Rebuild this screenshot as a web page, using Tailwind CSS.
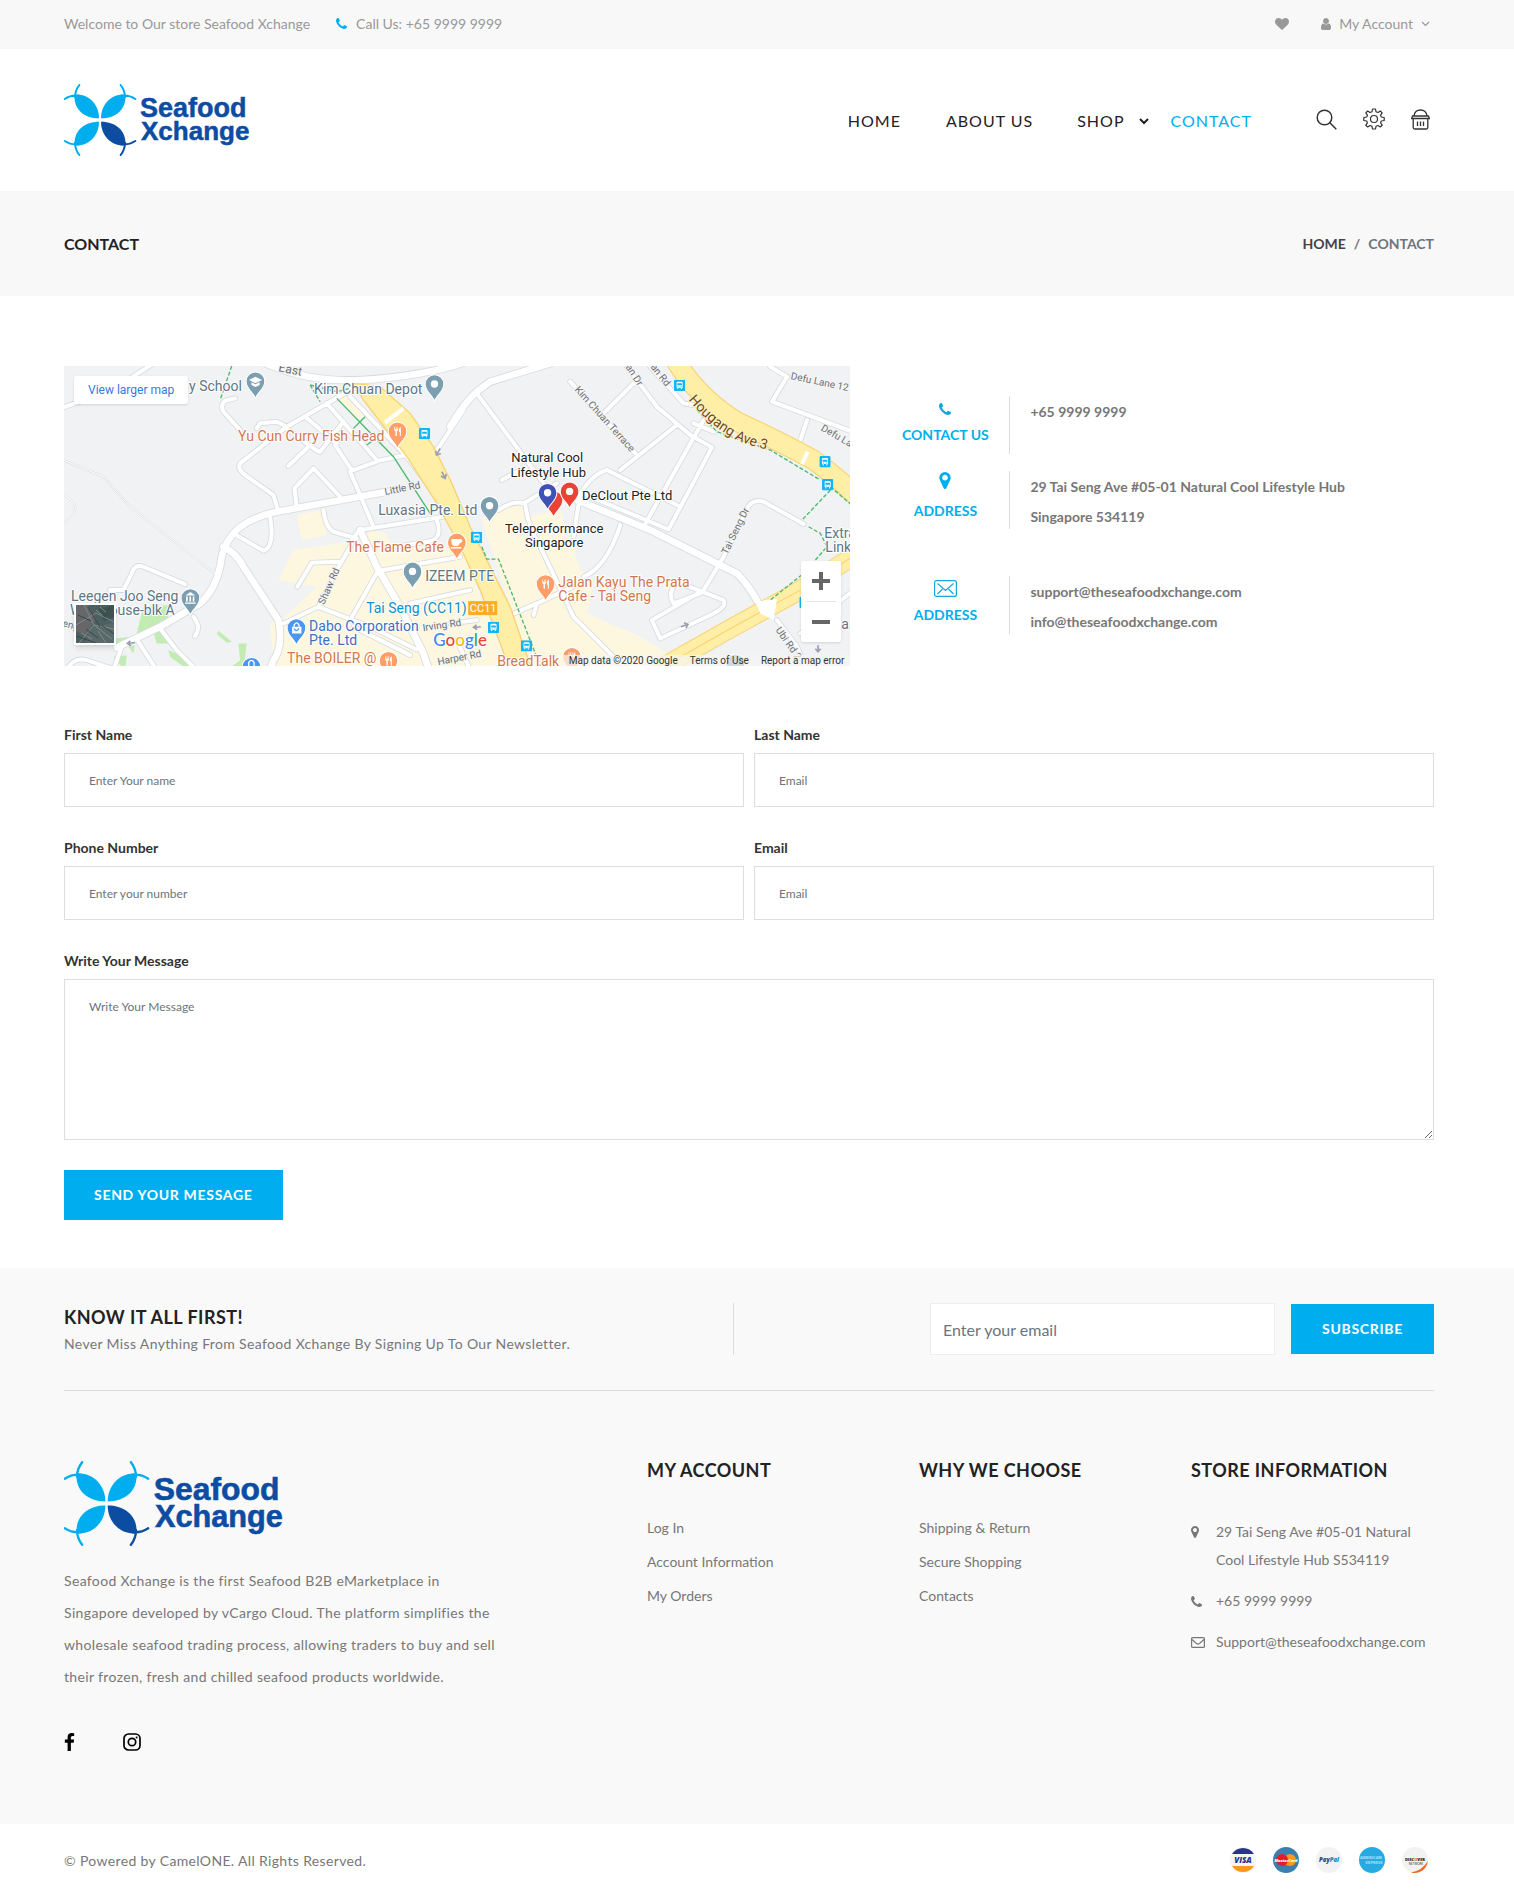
<!DOCTYPE html>
<html lang="en">
<head>
<meta charset="utf-8">
<meta name="viewport" content="width=device-width, initial-scale=1">
<title>Contact - Seafood Xchange</title>
<script src="https://cdn.jsdelivr.net/npm/@tailwindcss/browser@4"></script>
</head>
<body class="bg-white font-['Lato',sans-serif] text-sm text-[#777]">

<!-- shared icon definitions -->
<svg width="0" height="0" class="hidden" aria-hidden="true">
  <symbol id="phone" viewBox="192 256 1408 1408"><path d="M1600 1368q0 27-10 70.500t-21 68.500q-21 50-122 106-94 51-186 51-27 0-53-3.500t-57.500-12.500-47-14.500-55.500-20.500-49-18q-98-35-175-83-127-79-264-216t-216-264q-48-77-83-175-3-9-18-49t-20.500-55.500-14.500-47-12.500-57.500-3.500-53q0-92 51-186 56-101 106-122 25-11 68.500-21t70.500-10q14 0 21 3 18 6 53 76 11 19 30 54t35 63.500 31 53.500q3 4 17.500 25t21.500 35.500 7 28.500q0 20-28.500 50t-62 55-62 53-28.500 46q0 9 5 22.500t8.500 20.500 14 24 11.500 19q76 137 174 235t235 174q2 1 19 11.500t24 14 20.500 8.500 22.500 5q18 0 46-28.500t53-62 55-62 50-28.500q14 0 28.500 7t35.500 21.500 25 17.500q25 15 53.500 31t63.500 35 54 30q70 35 76 53 3 7 3 21z"/></symbol>
  <symbol id="marker" viewBox="384 128 1024 1536"><path d="M1152 640q0-106-75-181t-181-75-181 75-75 181 75 181 181 75 181-75 75-181zm256 0q0 109-33 179l-364 774q-16 33-47.500 52t-67.500 19-67.500-19-46.500-52l-365-774q-33-70-33-179 0-212 150-362t362-150 362 150 150 362z"/></symbol>
  <symbol id="heart" viewBox="0 128 1792 1536"><path d="M896 1664q-26 0-44-18l-624-602q-10-8-27.500-26t-55.500-65.500-68-97.500-53.500-121-23.500-138q0-220 127-344t351-124q62 0 126.500 21.500t120 58 95.500 68.500 76 68q36-36 76-68t95.500-68.500 120-58 126.500-21.500q224 0 351 124t127 344q0 221-229 450l-623 600q-18 18-44 18z"/></symbol>
  <symbol id="user" viewBox="256 128 1280 1536"><path d="M1536 1399q0 109-62.500 187t-150.500 78h-854q-88 0-150.500-78t-62.500-187q0-85 8.500-160.500t31.500-152 58.500-131 94-89 134.500-34.500q131 128 313 128t313-128q76 0 134.500 34.500t94 89 58.500 131 31.500 152 8.500 160.500zm-256-887q0 159-112.500 271.500t-271.500 112.500-271.500-112.500-112.500-271.500 112.500-271.500 271.500-112.500 271.500 112.500 112.500 271.500z"/></symbol>
  <symbol id="facebook" viewBox="479 0 864 1664"><path d="M1343 12v264h-157q-86 0-116 36t-30 108v189h293l-39 296h-254v759h-306v-759h-255v-296h255v-218q0-186 104-288.500t277-102.500q147 0 228 12z"/></symbol>
  <symbol id="logo" viewBox="0 0 188 72">
    <g transform="scale(.3333)">
      <g id="petal" fill="#00aeef" stroke="none"><path d="M32 32C72 28 105 60 105 103C60 103 28 75 32 32Z"/><path d="M46 3Q33 20 33 40M2 45Q20 33 42 35" fill="none" stroke="#00aeef" stroke-width="6" stroke-linecap="round"/></g>
      <use href="#petal" transform="matrix(-1 0 0 1 216 0)"/>
      <use href="#petal" transform="matrix(1 0 0 -1 0 216)"/>
      <g fill="#0c4da2" transform="rotate(180 108 108)"><path d="M32 32C72 28 105 60 105 103C60 103 28 75 32 32Z"/><path d="M46 3Q33 20 33 40M2 45Q20 33 42 35" fill="none" stroke="#0c4da2" stroke-width="6" stroke-linecap="round"/></g>
    </g>
    <g fill="#0c4da2" stroke="#0c4da2" stroke-width=".5" font-family="'Liberation Sans',Arial,sans-serif" font-weight="700"><text x="76" y="33" font-size="27">Seafood</text><text x="77" y="56" font-size="26">Xchange</text></g>
  </symbol>
  <symbol id="pin" viewBox="-30 -30 60 84" overflow="visible"><path d="M0 52C-4 34-28 24-28 0A28 28 0 1 1 28 0C28 24 4 34 0 52Z"/></symbol>
  <symbol id="bus" viewBox="0 0 34 34"><rect width="34" height="34" rx="4" fill="#12b5f5"/><path d="M8 9Q8 6 11 6H23Q26 6 26 9V24H8Z" fill="#fff"/><path d="M10 11H24V17H10ZM11 20H14V22H11ZM20 20H23V22H20Z" fill="#12b5f5"/><path d="M10 24H13V28H10ZM21 24H24V28H21Z" fill="#fff"/></symbol>
  <symbol id="fork" viewBox="-14 -16 28 32"><path d="M-10-14V-5Q-10-1-6 0V14H-2V0Q2-1 2-5V-14H0V-6H-3V-14H-5V-6H-8V-14ZM10-14Q4-12 4-3V2H7V14H10Z" fill="#fff"/></symbol>
</svg>

<div class="bg-[#f8f8f8]">
  <div class="flex h-[49px] items-center justify-between pr-20 pb-[2px] pl-16 text-[#999]">
    <div class="flex items-center">
      <span>Welcome to Our store Seafood Xchange</span>
      <svg class="mr-[9px] ml-[26px] size-[11px] fill-[#00aeef]"><use href="#phone"/></svg>
      <span>Call Us: +65 9999 9999</span>
    </div>
    <div class="flex items-center pr-1">
      <a href="#" aria-label="Wishlist"><svg class="h-3 w-[14px] fill-[#999]"><use href="#heart"/></svg></a>
      <button class="ml-8 flex items-center"><svg class="mr-2 h-3 w-[10px] fill-[#999]"><use href="#user"/></svg>My Account<svg class="ml-2 h-[6px] w-[9px]" viewBox="0 0 9 6" fill="none" stroke="#999" stroke-width="1.200"><path d="M1 1L4.500 4.500L8 1"/></svg></button>
    </div>
  </div>
</div>

<header class="flex items-center justify-between py-[35px] pr-20 pl-16">
  <a href="#" aria-label="Seafood Xchange"><svg class="h-[72px] w-[188px]"><use href="#logo"/></svg></a>
  <div class="flex items-center pr-1">
    <nav class="mt-[2px] flex items-center text-base leading-6 tracking-[1px] text-[#222]">
      <a href="#">HOME</a>
      <a href="#" class="ml-[45px]">ABOUT US</a>
      <a href="#" class="ml-11 flex items-center">SHOP<svg class="ml-[14px] h-[7px] w-[10px]" viewBox="0 0 10 7" fill="none" stroke="#222" stroke-width="2"><path d="M1 1L5 5L9 1"/></svg></a>
      <a href="#" class="ml-[22px] text-[#00aeef]">CONTACT</a>
    </nav>
    <div class="ml-16 flex items-center gap-[26px] pb-[2px]">
      <button aria-label="Search"><svg class="size-[21px]" viewBox="0 0 21 21" fill="none" stroke="#333" stroke-width="1.500"><circle cx="8.500" cy="8.500" r="7.300"/><path d="M13.800 13.800L20.300 20.300"/></svg></button>
      <button aria-label="Settings"><svg class="size-[22px]" viewBox="0 0 22 22" fill="none" stroke="#333" stroke-width="1.200" stroke-linejoin="round"><circle cx="11" cy="11" r="3.500"/><path d="M9.500 1H12.500L13 3.700L15 4.500L17.300 3L19.200 4.900L17.600 7.200L18.300 9L21.200 9.500V12.500L18.300 13L17.600 14.900L19.200 17.200L17.300 19L15 17.500L13 18.300L12.500 21H9.500L9 18.300L7 17.500L4.700 19L2.800 17.200L4.400 14.900L3.700 13L.8 12.500V9.500L3.700 9L4.400 7.200L2.800 4.900L4.700 3L7 4.500L9 3.700Z"/></svg></button>
      <button aria-label="Cart"><svg class="h-[21px] w-[19px]" viewBox="0 0 19 21" fill="none" stroke="#333" stroke-width="1.300"><path d="M3 7C4-1 15-1 16 7M1.500 7H17.500L18.300 9.500H.7ZM2.200 9.500V18.500Q2.200 20 3.800 20H15.200Q16.800 20 16.800 18.500V9.500"/><path d="M6.500 12.500V17M9.500 12.500V17M12.500 12.500V17"/></svg></button>
    </div>
  </div>
</header>

<div class="flex items-center justify-between bg-[#f8f8f8] py-10 pr-20 pl-16 leading-[25px] font-bold">
  <h1 class="text-base leading-[25px] text-[#222]">CONTACT</h1>
  <nav class="flex gap-2" aria-label="Breadcrumb"><a href="#" class="text-[#444]">HOME</a><span>/</span><span class="text-[#6c757d]">CONTACT</span></nav>
</div>

<main class="pt-[70px] pr-20 pb-12 pl-16">
  <section class="flex">
    <div class="relative h-[300px] w-[57.400%] shrink-0 overflow-hidden bg-[#f1f2f4] font-['Roboto',sans-serif]">
      <svg class="size-full" viewBox="0 0 786 300" preserveAspectRatio="xMinYMin slice" role="img" aria-label="Map of Tai Seng">
        <defs>
          <path id="lanes" d="M0 145L150 95L280 10M525 115L495 122Q480 135 490 155L540 210M880 85L680 200L540 310Q530 325 555 345L640 405L655 455M680 200L650 185L600 190L590 205M680 205L740 250L775 275M745 260L685 318M800 130L950 300M950 305L880 330Q868 325 865 315L825 255M850 185L780 275M950 303L1040 285M735 170L830 250M840 410L760 325L703 385L710 440M870 335L900 405L940 500M790 450Q795 500 820 515L890 535M630 470Q645 560 610 572L520 520M1150 470L900 510Q880 525 870 560L830 630L775 740L670 790M835 605L755 608L712 680M1200 590L970 630M955 630L870 780M775 740L930 800L1070 868M880 800L1050 885M375 672L250 620Q225 610 215 640L190 690L150 690M400 770Q425 800 405 828M300 805L350 870L410 930M235 845L290 930M20 930Q40 890 80 900L170 930M185 860L160 930M1210 150L1130 270M1130 480Q1150 540 1100 545L1010 560M1230 690L1050 730M1040 290L1200 500M870 110L1040 290M1170 790L1250 780M1190 840L1230 930M1250 100L1450 370M1325 360L1370 335M1530 65L1725 280M1630 160L1730 60M1680 330L1850 195M1700 20L1790 140L1890 225L1955 262L1825 508L1565 400M1930 180L1750 500M1540 530L1560 400Q1600 340 1640 330L1860 440M1680 495Q1640 620 1570 650M1315 450Q1360 420 1390 430L1490 370M1395 430Q1400 490 1440 560L1540 770L1630 860L1700 930M1350 765L1430 730L1580 660M1430 730L1420 765M2230 492L2110 425Q2070 415 2060 450L1990 590L1930 690L1775 780L1800 835L1960 760Q2000 740 1990 720L1850 665Q1820 700 1840 730L1920 700M2130 20L2180 50L2135 125L2390 220M2240 180L2215 255M1770 20L1870 130L1930 140M1900 190L1960 215M2150 780L2210 860L2240 930M2220 820L2380 690"/>
          <path id="streets" d="M980 395L650 455Q560 475 520 520Q485 560 480 620Q465 690 420 730L300 800L170 862M490 560Q530 580 550 620L655 780Q670 860 640 900L625 940M900 510L950 620L1020 740L1090 880L1110 940M620 12C700 45 780 65 900 60S1150 30 1210 8M1170 200Q1210 130 1250 95L1290 65L1470 10M1550 420L1770 510L2030 640Q2070 680 2100 740"/>
          <path id="trails" d="M10 300L130 350L210 440L465 640M10 405Q60 430 40 465L10 490"/>
          <path id="avenue" d="M624 34C644 58 666 72 680 77S704 84 735 92"/>
        </defs>
        <g transform="translate(-4 -6) scale(.33333)">
          <!-- built-up areas and parks -->
          <g fill="#fef7e0">
            <path d="M710 465L785 450L800 525L725 540ZM655 660L700 570L870 545L940 510L975 520L1000 560L1200 560L1350 930H645L630 790L665 780L770 680ZM835 120L860 100L920 165L890 180Z"/>
            <path d="M1265 480L1370 415L1400 470L1500 450L1560 630L1600 660L1580 760L1740 830L1900 930H1415L1350 740Z"/>
          </g>
          <path fill="#c2ecb3" d="M250 740L330 735L320 795L230 820ZM165 835L215 830L210 850L170 855ZM280 815L310 810L325 850L290 850ZM325 870L350 880L415 930H385L330 890ZM475 812L515 845L500 848L470 822ZM535 850L560 850L550 930H500L540 900ZM160 890L200 885L195 930ZM205 860L225 855L220 880Z"/>
          <!-- streets: grey casing below, white surface above -->
          <g fill="none" stroke="#d8dadd" stroke-linecap="round" stroke-linejoin="round"><use href="#lanes" stroke-width="17"/><use href="#streets" stroke-width="25"/><use href="#trails" stroke-width="6"/></g>
          <g fill="none" stroke="#fff" stroke-linecap="round" stroke-linejoin="round"><use href="#lanes" stroke-width="12"/><use href="#streets" stroke-width="20"/><use href="#trails" stroke-width="3"/></g>
          <path d="M1860 860L2090 740V770L1890 890H1830Z" fill="#dedfe1"/>
          <!-- main roads -->
          <path d="M880 70L960 80L1050 160L1120 260L1175 370L1230 500L1260 560L1350 740L1415 930H1350L1260 690L1200 560L1130 430L1040 290L910 120Z" fill="#ffeea5" stroke="#f8d374" stroke-width="4"/>
          <g fill="none"><path stroke="#f8d374" stroke-width="62" d="M1845 0Q1910 110 2030 185Q2170 250 2260 300Q2330 350 2400 420"/><path stroke="#ffeea5" stroke-width="55" d="M1845 0Q1910 110 2030 185Q2170 250 2260 300Q2330 350 2400 420"/>
          <path stroke="#f8d374" stroke-width="58" d="M2400 575L2220 690L2020 800L1790 930"/><path stroke="#ffeea5" stroke-width="52" d="M2400 575L2220 690L2020 800L1790 930"/><path stroke="#f8d374" stroke-width="3" d="M2400 575L2220 690L2020 800L1790 930"/></g>
          <path d="M2085 725L2150 715L2140 780L2100 760Z" fill="#fff"/>
          <path d="M975 188L1030 145M2242 275L2225 312" stroke="#fff" stroke-width="12"/>
          <g fill="none" stroke="#4bb86e" stroke-width="4"><path d="M830 115L1000 290L1110 460M915 170L880 205M940 240L920 255"/><path stroke-dasharray="12 6" d="M515 18L480 120M750 75L780 125M750 75L830 95L870 85M1910 150L1970 215L2130 270L2280 360M2310 390L2225 480M2245 500L2280 520L2300 560L2230 640L2130 720M2310 380L2380 440M1265 560L1280 597L1315 597L1440 918"/></g>
          <!-- one-way arrows -->
          <g fill="none" stroke="#9a9fb0" stroke-width="5"><path d="M1140 265L1130 283M1126 272L1129 285L1142 281M1145 335L1154 353M1142 348L1155 355L1158 342M202 850L225 847M211 842L202 850L213 857M1240 802L1262 800M1249 794L1240 802L1251 808M1862 800L1883 793M1871 788L1883 793L1877 804M2273 855V875M2265 866L2273 875L2281 866"/></g>
          <!-- bus stops -->
          <use href="#bus" x="1076" y="204" width="34" height="34"/><use href="#bus" x="1841" y="59" width="34" height="34"/><use href="#bus" x="2277" y="288" width="34" height="34"/><use href="#bus" x="2285" y="357" width="34" height="34"/><use href="#bus" x="1232" y="515" width="34" height="34"/><use href="#bus" x="1283" y="785" width="34" height="34"/><use href="#bus" x="1382" y="840" width="34" height="34"/><use href="#bus" x="2217" y="710" width="34" height="34"/>
          <!-- place pins -->
          <g fill="#7b9eb0" stroke="#fff" stroke-width="3">
            <use href="#pin" x="556" y="34" width="60" height="84"/><use href="#pin" x="1093" y="42" width="60" height="84"/><use href="#pin" x="361" y="684" width="60" height="84"/><use href="#pin" x="1027" y="604" width="60" height="84"/><use href="#pin" x="1258" y="407" width="60" height="84"/><use href="#pin" x="1995" y="880" width="60" height="84"/>
          </g>
          <g fill="#ff9e67" stroke="#fff" stroke-width="3"><use href="#pin" x="982" y="184" width="60" height="84"/><use href="#pin" x="1160" y="517" width="60" height="84"/><use href="#pin" x="955" y="872" width="60" height="84"/><use href="#pin" x="1426" y="642" width="60" height="84"/><use href="#pin" x="1505" y="860" width="60" height="84"/></g>
          <g fill="#4b96f3" stroke="#fff" stroke-width="3"><use href="#pin" x="679" y="774" width="60" height="84"/><use href="#pin" x="544" y="890" width="60" height="84"/></g>
          <g stroke="#fff" stroke-width="3"><use href="#pin" x="1450" y="390" width="60" height="84" fill="#ea4335"/><use href="#pin" x="1432" y="368" width="60" height="84" fill="#3f51b5"/><use href="#pin" x="1498" y="364" width="60" height="84" fill="#ea4335"/></g>
          <g fill="#fff"><circle cx="1123" cy="72" r="11"/><circle cx="1057" cy="634" r="11"/><circle cx="1288" cy="437" r="11"/><circle cx="1462" cy="398" r="11"/><circle cx="1528" cy="394" r="11"/><path d="M567 60L586 50L606 60L586 70ZM574 67L586 73L599 67V75L586 81L574 75ZM376 706L391 696L406 706ZM378 709H383V725H378ZM388 709H393V725H388ZM398 709H403V725H398ZM375 727H407V731H375ZM1174 537H1200Q1208 537 1206 546L1198 550Q1196 558 1186 558Q1176 558 1174 548ZM1172 561H1204V565H1172ZM696 800H724V820H696Z"/></g>
          <g fill="none" stroke="#fff" stroke-width="4"><path d="M702 800V795Q709 782 717 795V800M566 920V907Q574 894 582 907V920"/></g>
          <path d="M702 805Q709 818 717 805" fill="none" stroke="#4b96f3" stroke-width="4"/>
          <use href="#fork" x="998" y="198" width="28" height="32"/><use href="#fork" x="971" y="886" width="28" height="32"/><use href="#fork" x="1442" y="656" width="28" height="32"/><use href="#fork" x="1521" y="874" width="28" height="32"/>
        </g>
        <g font-size="10" fill="#6b6f73" stroke="#f5f5f5" stroke-width="2" paint-order="stroke">
          <text x="321" y="129" transform="rotate(-11 321 129)">Little Rd</text>
          <text x="260" y="239" transform="rotate(-66 260 239)">Shaw Rd</text>
          <text x="359" y="265" transform="rotate(-8 359 265)">Irving Rd</text>
          <text x="374" y="299" transform="rotate(-11 374 299)">Harper Rd</text>
          <text x="510" y="24" transform="rotate(48 510 24)">Kim Chuan Terrace</text>
          <text x="561" y="1" transform="rotate(57 561 1)">an Dr</text>
          <text x="586" y="1" transform="rotate(52 586 1)">an Rd</text>
          <text x="726" y="13" transform="rotate(12 726 13)">Defu Lane 12</text>
          <text x="756" y="64" transform="rotate(30 756 64)">Defu Lane</text>
          <text x="663" y="189" transform="rotate(-64 663 189)">Tai Seng Dr</text>
          <text x="711" y="264" transform="rotate(55 711 264)">Ubi Rd 2</text>
          <text x="-2" y="260" transform="rotate(15 -2 260)">eng</text>
          <text x="214" y="5" font-size="12" transform="rotate(12 214 5)">East</text>
        </g>
        <text font-size="14" fill="#6e4a1d" stroke="#fff3c4" stroke-width="2" paint-order="stroke"><textPath href="#avenue">Hougang Ave 3</textPath></text>
        <g font-size="14" stroke="#fff" stroke-width="2" stroke-linejoin="round" paint-order="stroke" fill="#5d7684">
          <text x="125" y="25">y School</text>
          <text x="250" y="28">Kim Chuan Depot</text>
          <text x="314" y="149">Luxasia Pte. Ltd</text>
          <text x="361" y="215">IZEEM PTE</text>
          <text x="7" y="235">Leegen Joo Seng</text>
          <text x="6" y="249">Warehouse-blk A</text>
          <text x="760" y="172">Extra</text><text x="761" y="186">Link</text>
          <text x="777" y="263">az</text>
          <g fill="#d3764c"><text x="174" y="75">Yu Cun Curry Fish Head</text><text x="282" y="186">The Flame Cafe</text><text x="223" y="297">The BOILER @</text><text x="494" y="221">Jalan Kayu The Prata</text><text x="494" y="235">Cafe - Tai Seng</text><text x="433" y="300">BreadTalk</text></g>
          <g fill="#3d6fc0"><text x="245" y="265">Dabo Corporation</text><text x="245" y="279">Pte. Ltd</text></g>
          <text x="302" y="247" fill="#0e8fce">Tai Seng (CC11)</text>
          <g fill="#222" font-size="13" text-anchor="middle"><text x="483" y="96">Natural Cool</text><text x="484" y="111">Lifestyle Hub</text><text x="490" y="167">Teleperformance</text><text x="490" y="181">Singapore</text><text x="563" y="134">DeClout Pte Ltd</text></g>
        </g>
        <rect x="404" y="235" width="29" height="14" fill="#fbad26"/><text x="419" y="246" font-size="11" fill="#fff" text-anchor="middle">CC11</text>
        <text x="369" y="280" font-size="17" font-weight="500" font-family="Lato,sans-serif" stroke="#fff" stroke-width="2" paint-order="stroke"><tspan fill="#4285f4">G</tspan><tspan fill="#ea4335">o</tspan><tspan fill="#fbbc05">o</tspan><tspan fill="#4285f4">g</tspan><tspan fill="#34a853">l</tspan><tspan fill="#ea4335">e</tspan></text>
      </svg>
      <a href="#" class="absolute top-[10px] left-[10px] rounded-xs bg-white px-[14px] py-[6px] text-xs leading-4 text-[#3a78e0] shadow">View larger map</a>
      <button aria-label="Satellite view" class="absolute bottom-[21px] left-[10px] size-[42px] border-2 border-white bg-[#4d5f60] shadow-md"><svg viewBox="0 0 38 38" class="size-full" fill="none" stroke-width="1"><path d="M0 0H12L20 14L9 30L0 26Z" fill="#67676a"/><path d="M22 4L38 0V12L28 16Z" fill="#3c5350"/><path d="M14 22L38 18V38H10Z" fill="#59696a"/><path stroke="#7e8b8b" d="M0 20L20 8L38 17M3 38L18 20L36 34M8 0L18 20L38 24M20 5L26 10M24 2L31 8M5 28L16 34M22 26L30 38"/><path stroke="#364846" d="M2 10L15 16M12 2L24 22M0 31L20 38M25 20L38 29M28 12L34 2M10 24L22 33"/></svg></button>
      <div class="absolute right-[9px] bottom-6 flex w-10 flex-col rounded-xs bg-white shadow">
        <button aria-label="Zoom in" class="flex h-10 items-center justify-center"><svg class="size-[18px]" viewBox="0 0 18 18"><path d="M7 0H11V7H18V11H11V18H7V11H0V7H7Z" fill="#666"/></svg></button>
        <span class="mx-[5px] h-px bg-[#e6e6e6]"></span>
        <button aria-label="Zoom out" class="flex h-10 items-center justify-center"><svg class="h-1 w-[18px]"><rect width="18" height="4" fill="#666"/></svg></button>
      </div>
      <div class="absolute right-0 bottom-0 flex gap-3 bg-[#f5f5f5]/70 px-[6px] text-[10px] leading-[11px] text-[#333]"><span>Map data ©2020 Google</span><a href="#">Terms of Use</a><a href="#">Report a map error</a></div>
    </div>

    <div class="flex-1 pt-[30px] pl-[31px] font-bold">
      <div class="mb-[15px] flex h-[60px]">
        <div class="flex h-[58px] w-[129px] flex-col items-center border-r border-[#ddd] pt-[7px] text-[#00aeef]"><svg class="mb-2 size-3 fill-[#1ba3e0]"><use href="#phone"/></svg><span class="leading-6">CONTACT US</span></div>
        <p class="pt-px pl-5 leading-[30px]"><a href="#">+65 9999 9999</a></p>
      </div>
      <div class="mb-[45px] flex h-[60px]">
        <div class="flex h-[58px] w-[129px] flex-col items-center border-r border-[#ddd] pt-[1px] text-[#00aeef]"><svg class="mb-[10px] h-[17px] w-3 fill-[#00aeef]"><use href="#marker"/></svg><span class="leading-6">ADDRESS</span></div>
        <p class="pt-px pl-5 leading-[30px]">29 Tai Seng Ave #05-01 Natural Cool Lifestyle Hub<br>Singapore 534119</p>
      </div>
      <div class="flex h-[60px]">
        <div class="flex h-[58px] w-[129px] flex-col items-center border-r border-[#ddd] pt-1 text-[#00aeef]"><svg class="mb-[6px] h-[17px] w-[23px]" viewBox="0 0 23 17" fill="none" stroke="#1ba3e0" stroke-width="1.200"><rect x=".6" y=".6" width="21.800" height="15.800" rx="2"/><path d="M3.500 3.500L11.500 10.500L19.500 3.500M3.500 14L8.500 9M19.500 14L14.500 9"/></svg><span class="leading-6">ADDRESS</span></div>
        <p class="flex flex-col pt-px pl-5 leading-[30px]"><a href="#">support@theseafoodxchange.com</a><a href="#">info@theseafoodxchange.com</a></p>
      </div>
    </div>
  </section>

  <form class="mt-[57px] grid grid-cols-2 gap-x-[10px] gap-y-[29px]">
    <div class="flex flex-col gap-[6px]"><label for="first" class="leading-6 font-bold text-[#333]">First Name</label><input id="first" type="text" placeholder="Enter Your name" class="h-[54px] w-full border border-[#ddd] px-6 text-xs placeholder:text-[#6c757d]"></div>
    <div class="flex flex-col gap-[6px]"><label for="last" class="leading-6 font-bold text-[#333]">Last Name</label><input id="last" type="text" placeholder="Email" class="h-[54px] w-full border border-[#ddd] px-6 text-xs placeholder:text-[#6c757d]"></div>
    <div class="flex flex-col gap-[6px]"><label for="phone-number" class="leading-6 font-bold text-[#333]">Phone Number</label><input id="phone-number" type="tel" placeholder="Enter your number" class="h-[54px] w-full border border-[#ddd] px-6 text-xs placeholder:text-[#6c757d]"></div>
    <div class="flex flex-col gap-[6px]"><label for="email" class="leading-6 font-bold text-[#333]">Email</label><input id="email" type="email" placeholder="Email" class="h-[54px] w-full border border-[#ddd] px-6 text-xs placeholder:text-[#6c757d]"></div>
    <div class="col-span-2 flex flex-col gap-[6px]"><label for="message" class="leading-6 font-bold text-[#333]">Write Your Message</label><textarea id="message" placeholder="Write Your Message" class="h-[161px] w-full resize border border-[#ddd] px-6 py-[19px] text-xs placeholder:text-[#6c757d]"></textarea></div>
    <div class="col-span-2"><button class="mt-px h-[50px] bg-[#00aeef] px-[30px] font-bold tracking-wider text-white">SEND YOUR MESSAGE</button></div>
  </form>
</main>

<footer>
  <div class="bg-[#f9f9f9] pt-[35px] pr-20 pb-[73px] pl-16">
    <div class="flex items-center justify-between border-b border-[#ddd] pb-[35px]">
      <div class="h-[52px] w-[670px] border-r border-[#ddd]">
        <h2 class="text-lg leading-7 font-bold tracking-wide text-[#222]">KNOW IT ALL FIRST!</h2>
        <p class="leading-[26px] tracking-wide">Never Miss Anything From Seafood Xchange By Signing Up To Our Newsletter.</p>
      </div>
      <form class="flex items-center gap-4">
        <input type="email" aria-label="Email address" placeholder="Enter your email" class="h-[52px] w-[345px] border border-[#eee] bg-white px-3 text-base placeholder:text-[#6c757d]">
        <button class="h-[50px] bg-[#00aeef] px-[31px] font-bold tracking-wider text-white">SUBSCRIBE</button>
      </form>
    </div>

    <div class="grid grid-cols-[583fr_272fr_272fr_243fr] pt-[67px]">
      <div>
        <a href="#" aria-label="Seafood Xchange" class="mt-[3px] block"><svg class="h-[85px] w-[222px]"><use href="#logo"/></svg></a>
        <p class="mt-[19px] max-w-[440px] leading-8 tracking-wide">Seafood Xchange is the first Seafood B2B eMarketplace in Singapore developed by vCargo Cloud. The platform simplifies the wholesale seafood trading process, allowing traders to buy and sell their frozen, fresh and chilled seafood products worldwide.</p>
        <div class="mt-10 flex items-center gap-12">
          <a href="#" aria-label="Facebook"><svg class="h-[18px] w-[11px] fill-black"><use href="#facebook"/></svg></a>
          <a href="#" aria-label="Instagram"><svg class="size-[18px]" viewBox="0 0 18 18" fill="none" stroke="#000" stroke-width="1.700"><rect x="1" y="1" width="16" height="16" rx="4.500"/><circle cx="9" cy="9" r="3.700"/><circle cx="13.600" cy="4.500" r="1" fill="#000" stroke="none"/></svg></a>
        </div>
      </div>
      <div>
        <h2 class="text-lg leading-6 font-bold tracking-wide text-[#222]">MY ACCOUNT</h2>
        <ul class="mt-[29px] leading-[34px]"><li><a href="#">Log In</a></li><li><a href="#">Account Information</a></li><li><a href="#">My Orders</a></li></ul>
      </div>
      <div>
        <h2 class="text-lg leading-6 font-bold tracking-wide text-[#222]">WHY WE CHOOSE</h2>
        <ul class="mt-[29px] leading-[34px]"><li><a href="#">Shipping &amp; Return</a></li><li><a href="#">Secure Shopping</a></li><li><a href="#">Contacts</a></li></ul>
      </div>
      <div>
        <h2 class="text-lg leading-6 font-bold tracking-wide text-[#222]">STORE INFORMATION</h2>
        <ul class="mt-9 flex flex-col gap-[13px] leading-7">
          <li class="flex"><span class="flex h-7 w-[25px] shrink-0 items-center"><svg class="h-3 w-2 fill-[#777]"><use href="#marker"/></svg></span><span>29 Tai Seng Ave #05-01 Natural<br>Cool Lifestyle Hub S534119</span></li>
          <li class="flex"><span class="flex h-7 w-[25px] shrink-0 items-center"><svg class="size-[11px] fill-[#777]"><use href="#phone"/></svg></span>+65 9999 9999</li>
          <li class="flex"><span class="flex h-7 w-[25px] shrink-0 items-center"><svg class="h-[11px] w-[14px]" viewBox="0 0 14 11" fill="none" stroke="#777" stroke-width="1.200"><rect x=".6" y=".6" width="12.800" height="9.800" rx="1"/><path d="M1 2.500L5.500 6.500Q7 7.700 8.500 6.500L13 2.500"/></svg></span><a href="#">Support@theseafoodxchange.com</a></li>
        </ul>
      </div>
    </div>
  </div>

  <div class="flex h-[70px] items-center justify-between pr-[86px] pl-16">
    <p class="mt-1 tracking-wide">© Powered by CamelONE. All Rights Reserved.</p>
    <div class="mt-[2px] flex gap-[17px] font-['Open_Sans',sans-serif]">
      <svg class="size-[26px]" viewBox="0 0 26 26" role="img" aria-label="Visa"><circle cx="13" cy="13" r="13" fill="#f5f5f6"/><path d="M2 7A13 13 0 0 1 24 7Z" fill="#26348b"/><path d="M2 19A13 13 0 0 0 24 19Z" fill="#f8981d"/><text x="13" y="16" font-size="8" font-weight="800" font-style="italic" fill="#26348b" text-anchor="middle">VISA</text></svg>
      <svg class="size-[26px]" viewBox="0 0 26 26" role="img" aria-label="MasterCard"><circle cx="13" cy="13" r="13" fill="#3b7fb0"/><circle cx="17" cy="13" r="6" fill="#f8981d"/><circle cx="9" cy="13" r="6" fill="#e01f2d"/><text x="13" y="15" font-size="4" font-weight="800" font-style="italic" fill="#fff" text-anchor="middle">MasterCard</text></svg>
      <svg class="size-[26px]" viewBox="0 0 26 26" role="img" aria-label="PayPal"><circle cx="13" cy="13" r="13" fill="#f2f2f3"/><text x="13" y="15" font-size="6" font-weight="800" font-style="italic" fill="#1d4c7c" text-anchor="middle">Pay<tspan fill="#1f88be">Pal</tspan></text></svg>
      <svg class="size-[26px]" viewBox="0 0 26 26" role="img" aria-label="American Express"><circle cx="13" cy="13" r="13" fill="#27aae1"/><g font-size="4" font-weight="800" fill="#9eddf8" text-anchor="middle"><text x="12" y="12">AMERICAN</text><text x="15" y="17">EXPRESS</text></g></svg>
      <svg class="size-[26px]" viewBox="0 0 26 26" role="img" aria-label="Discover"><circle cx="13" cy="13" r="13" fill="#f2f2f3"/><path d="M25.800 14A13 13 0 0 1 9 25.400Q20 24 25.800 14Z" fill="#f26a21"/><text x="13" y="14" font-size="4" font-weight="800" fill="#222" text-anchor="middle">DISC<tspan fill="#f26a21">O</tspan>VER</text><text x="14" y="18" font-size="3" fill="#222" text-anchor="middle">NETWORK</text></svg>
    </div>
  </div>
</footer>
</body>
</html>
